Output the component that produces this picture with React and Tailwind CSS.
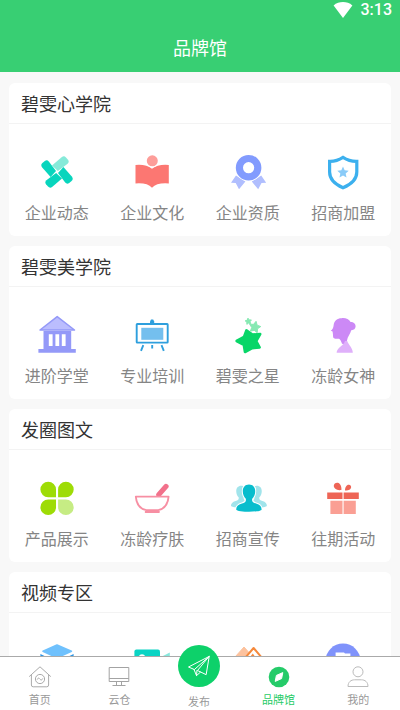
import React from "react";

function Icon({ children }) {
  return (
    <svg viewBox="-20 -20 40 40" className="size-10" aria-hidden="true">
      {children}
    </svg>
  );
}

const BLADE = "M-5 -6.4 L4.6 -14.8 Q7 -16.8 9 -14.6 L11 -12.2 Q12.6 -10 10.6 -8.2 L0.9 -1 Z";

function starPoints(cx, cy, outer, inner, turn) {
  const points = [];
  for (let i = 0; i < 10; i++) {
    const r = i % 2 ? inner : outer;
    const a = ((i * 36 + turn) * Math.PI) / 180;
    points.push(`${(cx + r * Math.sin(a)).toFixed(2)},${(cy - r * Math.cos(a)).toFixed(2)}`);
  }
  return points.join(" ");
}

const Pinwheel = () => (
  <Icon>
    {[0, 90, 180, 270].map((turn) => (
      <path key={turn} d={BLADE} transform={`rotate(${turn})`} fill={turn === 0 ? "#86ead9" : "#08d5bd"} />
    ))}
  </Icon>
);

const Book = () => (
  <Icon>
    <path d="M-16.5 -7 Q-6 -8 0 -3.2 Q6 -8 16.8 -7 V11.5 Q5 10.5 0 15.8 Q-5 10.5 -16.5 11.5 Z" fill="#fc7772" />
    <circle cx="0.3" cy="-11.2" r="6.6" fill="#fff" />
    <circle cx="0.3" cy="-11.2" r="5.5" fill="#fd9d99" />
  </Icon>
);

const Medal = () => (
  <Icon>
    <path d="M-12 3.5 L-17 10.8 L-12.3 11 L-9 17.3 L-2.6 9.6 Z M13.2 3.5 L18.2 10.8 L13.5 11 L10.2 17.3 L3.8 9.6 Z" fill="#b0befe" />
    <circle cx="0.6" cy="-4.3" r="13.6" fill="#fff" />
    <circle cx="0.6" cy="-4.3" r="9.2" fill="none" stroke="#829bfe" strokeWidth="7.2" />
  </Icon>
);

const Shield = () => (
  <Icon>
    <path d="M0 -14.6 Q-6.5 -10.4 -13.4 -10.6 V0 Q-13.4 10 0 15.8 Q13.8 10 13.8 0 V-10.6 Q6.5 -10.4 0 -14.6 Z" fill="none" stroke="#3cb0ee" strokeWidth="3.2" />
    <polygon points={starPoints(0, 0.6, 6, 2.8, 0)} fill="#8acbf8" />
  </Icon>
);

const Hall = () => (
  <Icon>
    <path d="M-13.5 -4 H14.2 V14 H18.8 V17.8 H-18.6 V14 H-13.5 Z" fill="#9499f8" />
    <path d="M0.2 -18.4 L17.5 -5 H-17 Z" fill="#bbbdfe" stroke="#9499f8" strokeWidth="1.5" strokeLinejoin="round" />
    <path d="M-8.2 -0.7 h3.8 v11.7 h-3.8 Z M-1.6 -0.7 h3.8 v11.7 h-3.8 Z M4.8 -0.7 h3.8 v11.7 h-3.8 Z" fill="#fff" />
  </Icon>
);

const Easel = () => (
  <Icon>
    <path d="M-2 -11.5 V-13.6 L-1 -15.4 H1.2 L2.2 -13.6 V-11.5 Z" fill="#2e9fdd" />
    <rect x="-15.3" y="-11" width="31" height="18.6" rx="0.6" fill="#fff" stroke="#2e9fdd" strokeWidth="1.9" />
    <rect x="-10.7" y="-7.2" width="22" height="12" fill="#74bfee" />
    <path d="M-8.7 10.2 L-11 15.8 M9.5 10.2 L11.8 15.8 M0.2 10 V13.4" stroke="#2e9fdd" strokeWidth="1.9" />
  </Icon>
);

const Stars = () => (
  <Icon>
    <path d="M-1.6 -4.6 L4.4 -0.4 L12.2 -0.9 L8.2 6.2 L11.6 12.4 L4.2 13.2 L-3 17 L-4.2 9.8 L-11.4 6 L-4 2 Z" fill="#08d668" stroke="#08d668" strokeWidth="2.6" strokeLinejoin="round" />
    <polygon points={starPoints(6.8, -7.8, 6, 3.1, 12)} fill="#86e9b2" stroke="#86e9b2" strokeWidth="1" strokeLinejoin="round" />
    <polygon points={starPoints(0.4, -13.6, 3.3, 1.7, -8)} fill="#86e9b2" stroke="#86e9b2" strokeWidth="1" strokeLinejoin="round" />
  </Icon>
);

const Lady = () => (
  <Icon>
    <path d="M-9.4 -9.6 C-9 -14.6 -5 -17 -1.4 -16.8 C2.4 -17.4 6 -15.6 7.6 -13 C10.6 -13 12.8 -11 12.6 -8.4 C12.4 -6 10.6 -4.6 8.2 -4.8 C7.6 -1.4 4.4 1.8 4 5.4 L2.2 9.6 L-1 8.8 C-1.6 6.6 -2.6 4.6 -4 3.8 C-6 3.4 -8.4 4.2 -9.4 3 C-10.2 2 -9.8 0 -10.2 -1.8 L-10.4 -3.4 L-12.2 -4.2 C-10.4 -5.8 -9.6 -7.4 -9.4 -9.6 Z" fill="#cc89f6" />
    <path d="M2 6 C0.6 11 -6.2 12.4 -6.4 17.8 H9.8 C9.8 13 5.6 10 4.2 6 Z" fill="#dfb0fa" />
  </Icon>
);

const Clover = () => (
  <Icon>
    <path d="M-1 -0.7 H-8.8 A7.8 7.8 0 1 1 -1 -8.5 Z M1.1 -0.7 H8.9 A7.8 7.8 0 1 0 1.1 -8.5 Z M-1 1.5 H-8.8 A7.8 7.8 0 1 0 -1 9.3 Z" fill="#9edc06" />
    <path d="M1.1 1.5 H8.9 A7.8 7.8 0 1 1 1.1 9.3 Z" fill="#c6ec84" />
  </Icon>
);

const Bowl = () => (
  <Icon>
    <path d="M6.8 -3.4 L14 -11.6" stroke="#f2718b" strokeWidth="5.2" strokeLinecap="round" />
    <path d="M2 -2 H12 V2 H2 Z" fill="#fff" />
    <path d="M-16.2 -1.4 H16.6 C16 6 12 11 6.2 12.2 L7 14 H-6.4 L-5.6 12.2 C-12 11 -15.6 6 -16.2 -1.4 Z M-5.6 12.2 H6.2" fill="none" stroke="#f78fa3" strokeWidth="1.8" strokeLinejoin="round" />
    <path d="M-6 13.3 H6.6" stroke="#f78fa3" strokeWidth="2" />
  </Icon>
);

const PERSON = "M1 -13.6 C5 -13.6 7.2 -10.8 7.2 -6.8 C7.2 -3.6 6 -1 4.2 0.8 C3.6 3.6 5 4.6 8 5.4 C12 6.5 13.6 8.6 13.6 11.4 C13.6 13 6 13.8 1 13.8 C-4 13.8 -11.8 13 -11.8 11.4 C-11.8 8.6 -10 6.5 -6 5.4 C-3 4.6 -1.6 3.6 -2.2 0.8 C-4 -1 -5.2 -3.6 -5.2 -6.8 C-5.2 -10.8 -3 -13.6 1 -13.6 Z";

const People = () => (
  <Icon>
    <path d={PERSON} transform="translate(-7.6 -1.4) scale(.8)" fill="#a1e4eb" />
    <path d={PERSON} transform="translate(8 -1.4) scale(.8)" fill="#a1e4eb" />
    <path d={PERSON} fill="#08bdcd" stroke="#fff" strokeWidth="2" paintOrder="stroke" />
  </Icon>
);

const Gift = () => (
  <Icon>
    <path d="M-1.6 -8 C-6 -7.2 -9.4 -9.4 -9.2 -12.4 C-9 -15.4 -5 -16.4 -3 -13.8 C-1.8 -12.2 -1.4 -10.2 -1.6 -8 Z M2 -7.6 C2 -10.8 3.6 -13.4 6 -13.2 C8.8 -12.8 8.8 -9.4 6.4 -8.2 C5 -7.4 3.4 -7.2 2 -7.6 Z M-15.8 -5.6 H-0.5 V1 H-15.8 Z M0.6 -5.6 H15.8 V1 H0.6 Z" fill="#ee6556" />
    <path d="M-12.6 2.8 H-0.5 V16 H-12.6 Z M0.6 2.8 H12.8 V16 H0.6 Z" fill="#fa9f94" />
  </Icon>
);

const Layers = () => (
  <Icon>
    <path d="M-16.6 -7 L0 1 L16.6 -7 V3 L0 11 L-16.6 3 Z" fill="#2b94e4" />
    <path d="M0 -16 L15 -9.8 L0 -3.2 L-14.6 -9.8 Z" fill="#6fc1fd" stroke="#fff" strokeWidth="3.6" strokeLinejoin="round" />
    <path d="M0 -16 L14.4 -9.8 L0 -3.2 L-14 -9.8 Z" fill="#6fc1fd" stroke="#6fc1fd" strokeWidth="1.6" strokeLinejoin="round" />
  </Icon>
);

const Camera = () => (
  <Icon>
    <rect x="-17.6" y="-11.4" width="25.6" height="24" rx="2" fill="#0ad4c4" />
    <circle cx="-10" cy="-3.6" r="3.2" fill="#fff" />
    <path d="M9 -4 L17.8 -8.6 V9 L9 4.6 Z" fill="#88e8dd" />
  </Icon>
);

const Hills = () => (
  <Icon>
    <path d="M-4 -14 L-18 1.6 H10 Z" fill="#fcc29e" stroke="#fcc29e" strokeLinejoin="round" />
    <path d="M5.6 -13 L-9 4 H20 Z" fill="#fff" stroke="#f5893b" strokeWidth="2" strokeLinejoin="round" />
    <path d="M4.8 -7.4 L-2 1 H11 Z" fill="#f5893b" />
  </Icon>
);

const Flag = () => (
  <Icon>
    <circle cx="0" cy="0" r="17.5" fill="#8093fb" />
    <path d="M-7.4 -8.6 H1 L2 -7.6 H7.4 V2 H-6 V8 H-7.4 Z" fill="#fff" />
  </Icon>
);

const sections = [
  {
    title: "碧雯心学院",
    items: [
      { Art: Pinwheel, label: "企业动态" },
      { Art: Book, label: "企业文化" },
      { Art: Medal, label: "企业资质" },
      { Art: Shield, label: "招商加盟" },
    ],
  },
  {
    title: "碧雯美学院",
    items: [
      { Art: Hall, label: "进阶学堂" },
      { Art: Easel, label: "专业培训" },
      { Art: Stars, label: "碧雯之星" },
      { Art: Lady, label: "冻龄女神" },
    ],
  },
  {
    title: "发圈图文",
    items: [
      { Art: Clover, label: "产品展示" },
      { Art: Bowl, label: "冻龄疗肤" },
      { Art: People, label: "招商宣传" },
      { Art: Gift, label: "往期活动" },
    ],
  },
  {
    title: "视频专区",
    items: [{ Art: Layers }, { Art: Camera }, { Art: Hills }, { Art: Flag }],
  },
];

function Section({ title, items }) {
  return (
    <section className="rounded-md bg-white pb-3">
      <h2 className="h-10 px-3 text-lg leading-10 text-[#333333]">{title}</h2>
      <div className="grid grid-cols-4 border-t border-[#f3f3f3] pt-7">
        {items.map(({ Art, label }, i) => (
          <button key={i} type="button" className="flex flex-col items-center gap-2">
            <Art />
            {label && <span className="text-base leading-6 whitespace-nowrap text-[#858585]">{label}</span>}
          </button>
        ))}
      </div>
    </section>
  );
}

function NavItem({ label, active, children }) {
  return (
    <button
      type="button"
      aria-current={active ? "page" : undefined}
      className={`flex flex-col items-center gap-1 pt-2 text-[11px] leading-3 ${active ? "text-[#1fcb66]" : "text-[#999999]"}`}
    >
      <svg viewBox="0 0 24 24" className="size-6" fill="none" aria-hidden="true">
        {children}
      </svg>
      <span>{label}</span>
    </button>
  );
}

export default function App() {
  return (
    <div className="flex h-screen flex-col bg-[#f8f8f8] font-['Noto_Sans_CJK_SC',sans-serif]">
      <header className="h-[72px] shrink-0 bg-[#38cf73] text-white">
        <div className="flex h-5 items-center justify-end gap-2 pr-2">
          <svg viewBox="0 0 20 18" className="h-[18px] w-5" aria-hidden="true">
            <path d="M10 17 L0.6 4.4 C6 0 14 0 19.4 4.4 Z" fill="#fff" />
          </svg>
          <span className="font-[Roboto,sans-serif] text-base leading-5 font-medium">3:13</span>
        </div>
        <h1 className="text-center text-lg leading-[54px]">品牌馆</h1>
      </header>

      <main className="flex min-h-0 flex-1 flex-col gap-[10px] overflow-y-auto px-[9px] pt-[11px] [scrollbar-width:none]">
        {sections.map((section) => (
          <Section key={section.title} {...section} />
        ))}
      </main>

      <nav className="grid h-[54px] shrink-0 grid-cols-5 border-t border-[#aaaaaa] bg-white pr-0.5">
        <NavItem label="首页">
          <path d="M1.2 11.6 L12 1.8 L22.8 11.6 M3.4 10 V20 Q3.4 21.8 5.2 21.8 H18.8 Q20.6 21.8 20.6 20 V10" stroke="#aaaaaa" strokeLinejoin="round" />
          <circle cx="12" cy="14" r="4.6" stroke="#aaaaaa" />
          <path d="M9.2 14.6 C10 12.4 11.2 13 12 14.2 C12.8 15.2 14 15.4 14.8 13.4" stroke="#aaaaaa" />
        </NavItem>
        <NavItem label="云仓">
          <path d="M2.2 2.5 H21.8 V16.5 H2.2 Z M2.2 13.5 H21.8 M9.5 16.5 V20.5 M14.5 16.5 V20.5 M5.5 20.5 H18.5" stroke="#a3a3a3" />
        </NavItem>
        <button type="button" className="relative flex flex-col items-center justify-end gap-2 pb-[3px] text-[11px] leading-3 text-[#999999]">
          <span className="-mt-4 flex size-[42px] shrink-0 items-center justify-center rounded-full bg-[#0dd16a]">
            <svg viewBox="0 0 24 24" className="size-6" fill="none" stroke="#fff" strokeLinejoin="round" strokeLinecap="round" aria-hidden="true">
              <path d="M22 2.5 L1.5 13 L7 15.4 Z M22 2.5 L10.5 16.5 L18.8 20.5 Z M10 16.4 L9.5 21.6 L13.4 18.2 M7 15.4 L9.5 21.6" />
            </svg>
          </span>
          <span>发布</span>
        </button>
        <NavItem label="品牌馆" active>
          <circle cx="12" cy="12" r="10.3" fill="#25cb69" />
          <path d="M15.8 7.6 L14.6 13.6 L8.2 16.4 L9.4 10.4 Z" fill="#fff" stroke="#fff" strokeLinejoin="round" />
        </NavItem>
        <NavItem label="我的">
          <circle cx="12" cy="6.8" r="5" stroke="#bbbbbb" />
          <path d="M2 21.5 C2 17 5 14.8 8.6 14.8 H15.4 C19 14.8 22 17 22 21.5 Z" stroke="#bbbbbb" strokeLinejoin="round" />
        </NavItem>
      </nav>
    </div>
  );
}
